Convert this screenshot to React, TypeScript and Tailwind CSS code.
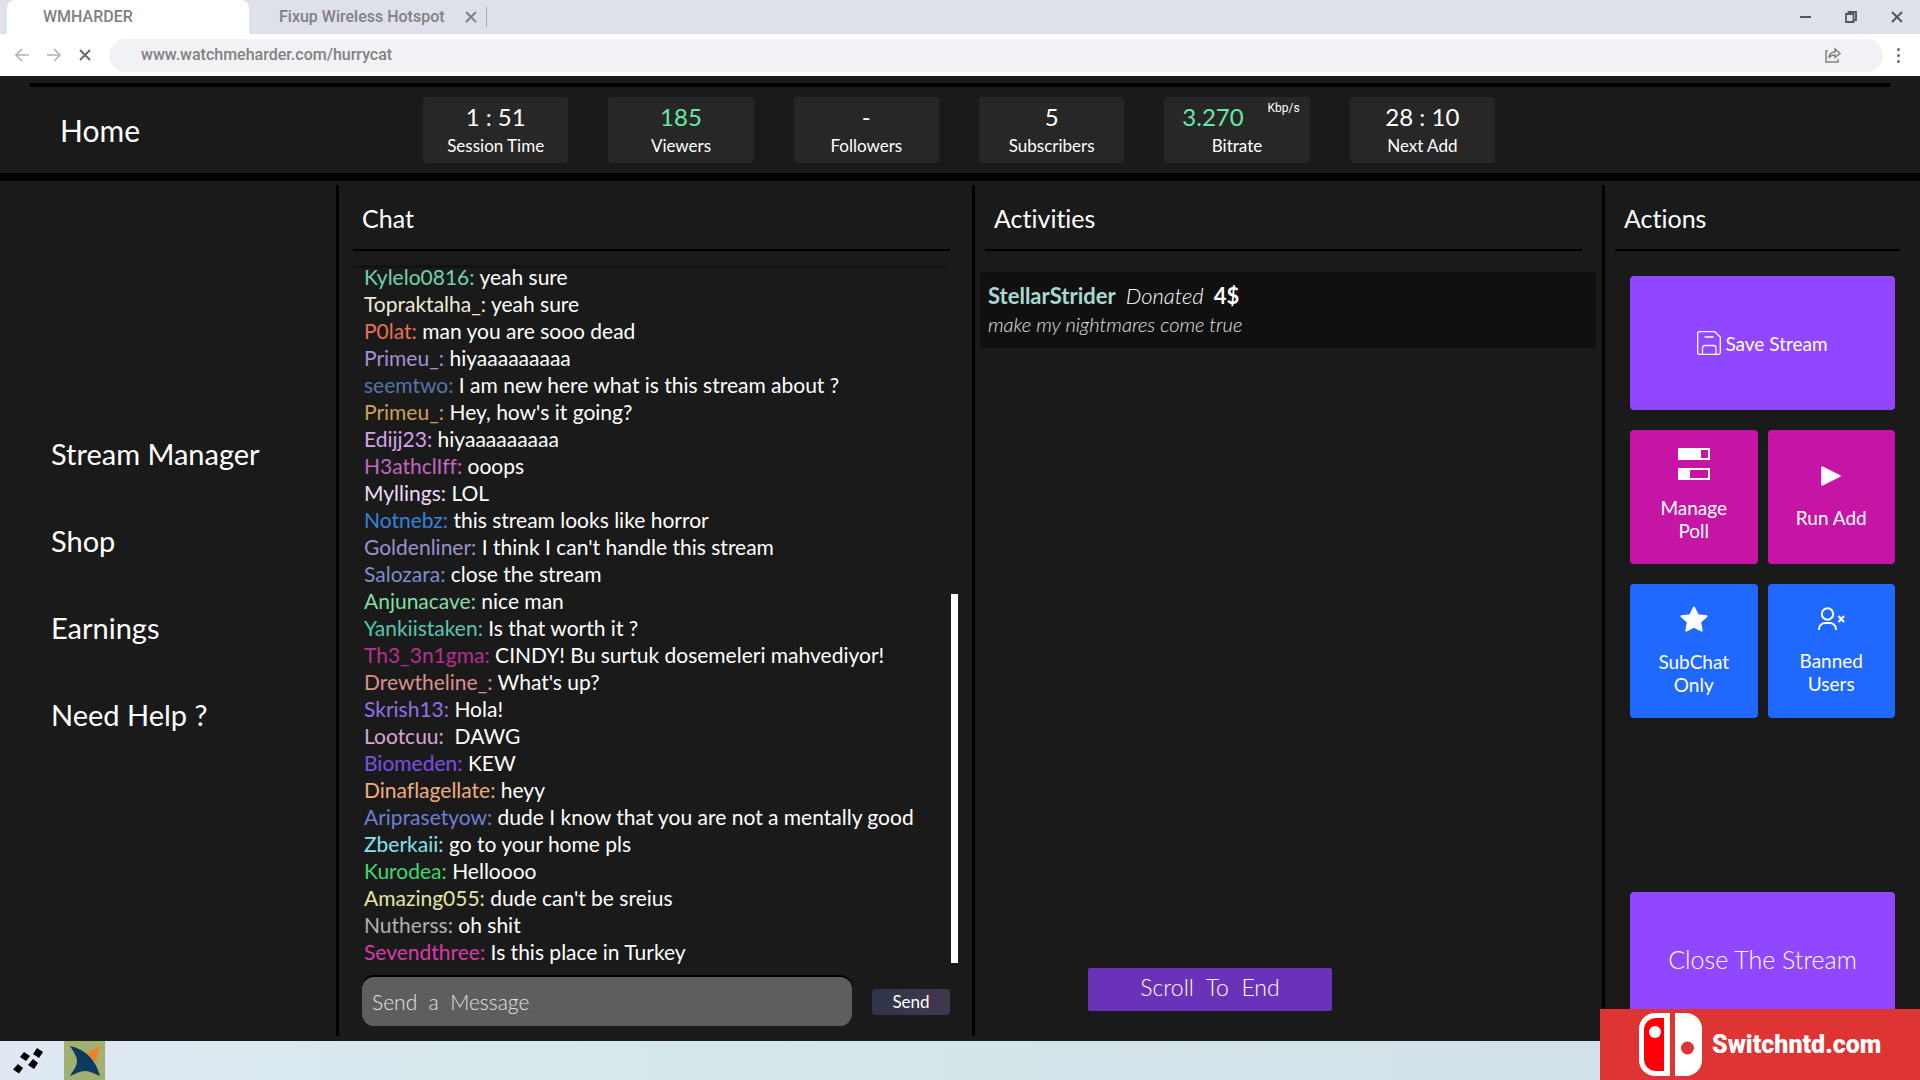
import { useState } from 'react';

const stats = [
  { value: '1 : 51', label: 'Session Time' },
  { value: '185', label: 'Viewers', green: true },
  { value: '-', label: 'Followers' },
  { value: '5', label: 'Subscribers' },
  { value: '3.270', label: 'Bitrate', green: true, unit: 'Kbp/s' },
  { value: '28 : 10', label: 'Next Add' },
];

const navLinks = [
  { href: '#manager', label: 'Stream Manager' },
  { href: '#shop', label: 'Shop' },
  { href: '#earnings', label: 'Earnings' },
  { href: '#help', label: 'Need Help ?' },
];

const messages = [
  { user: 'Kylelo0816', color: 'text-[#6fd3ab]', text: 'yeah sure' },
  { user: 'Topraktalha_', color: 'text-[#efe9dc]', text: 'yeah sure' },
  { user: 'P0lat', color: 'text-[#e8705c]', text: 'man you are sooo dead' },
  { user: 'Primeu_', color: 'text-[#a58fd6]', text: 'hiyaaaaaaaaa' },
  { user: 'seemtwo', color: 'text-[#5474ac]', text: 'I am new here what is this stream about ?' },
  { user: 'Primeu_', color: 'text-[#cda055]', text: "Hey, how's it going?" },
  { user: 'Edijj23', color: 'text-[#d7a3ea]', text: 'hiyaaaaaaaaa' },
  { user: 'H3athclIff', color: 'text-[#c268bf]', text: 'ooops' },
  { user: 'Myllings', color: 'text-[#eadcf5]', text: 'LOL' },
  { user: 'Notnebz', color: 'text-[#3682de]', text: 'this stream looks like horror' },
  { user: 'Goldenliner', color: 'text-[#9c92cb]', text: "I think I can't handle this stream" },
  { user: 'Salozara', color: 'text-[#7f8dcd]', text: 'close the stream' },
  { user: 'Anjunacave', color: 'text-[#84dfa5]', text: 'nice man' },
  { user: 'Yankiistaken', color: 'text-[#55c6b4]', text: 'Is that worth it ?' },
  { user: 'Th3_3n1gma', color: 'text-[#b92f93]', text: 'CINDY! Bu surtuk dosemeleri mahvediyor!' },
  { user: 'Drewtheline_', color: 'text-[#de9090]', text: "What's up?" },
  { user: 'Skrish13', color: 'text-[#9471e6]', text: 'Hola!' },
  { user: 'Lootcuu', color: 'text-[#dba5d4]', text: '\u00a0DAWG' },
  { user: 'Biomeden', color: 'text-[#7b50e0]', text: 'KEW' },
  { user: 'Dinaflagellate', color: 'text-[#efac80]', text: 'heyy' },
  { user: 'Ariprasetyow', color: 'text-[#6f7fd2]', text: 'dude I know that you are not a mentally good' },
  { user: 'Zberkaii', color: 'text-[#84e2ee]', text: 'go to your home pls' },
  { user: 'Kurodea', color: 'text-[#3fd873]', text: 'Helloooo' },
  { user: 'Amazing055', color: 'text-[#e2e6a4]', text: "dude can't be sreius" },
  { user: 'Nutherss', color: 'text-[#b4b0b0]', text: 'oh shit' },
  { user: 'Sevendthree', color: 'text-[#d93aa9]', text: 'Is this place in Turkey' },
];

const CloseIcon = ({ className = '' }: { className?: string }) => (
  <svg className={className} width="12" height="12" viewBox="0 0 12 12" stroke="currentColor" strokeWidth="2" fill="none">
    <path d="M1 1l10 10M11 1L1 11" />
  </svg>
);

const ArrowIcon = ({ className = '' }: { className?: string }) => (
  <svg className={className} width="14" height="14" viewBox="0 0 14 14" stroke="currentColor" strokeWidth="1.6" fill="none">
    <path d="M14 7H1.5M7 1L1 7l6 6" />
  </svg>
);

const SaveIcon = () => (
  <svg width="24" height="24" viewBox="0 0 24 24" fill="none" stroke="currentColor" strokeWidth="1.3" strokeLinejoin="round">
    <path d="M2.5 .7h15.3l5.5 5.5v15.3a1.8 1.8 0 0 1-1.8 1.8h-19A1.8 1.8 0 0 1 .7 21.5V2.5A1.8 1.8 0 0 1 2.5.7z" />
    <path d="M7.5 6h9M5.5 23v-6A2.5 2.5 0 0 1 8 14.5h8.5A2.5 2.5 0 0 1 19 17v6" />
  </svg>
);

const PollIcon = () => (
  <svg width="32" height="32" viewBox="0 0 32 32" fill="none">
    <path d="M1 1h30v10H1zM1 21h30v10H1z" stroke="currentColor" strokeWidth="2" />
    <path d="M0 0h23v12H0zM0 20h12v12H0z" fill="currentColor" />
  </svg>
);

const PlayIcon = () => (
  <svg width="20" height="20" viewBox="0 0 20 20" fill="currentColor" stroke="currentColor" strokeWidth="1.5" strokeLinejoin="round">
    <path d="M1 1l18 9-18 9z" />
  </svg>
);

const StarIcon = () => (
  <svg width="28" height="26" viewBox="0 0 28 26" fill="currentColor" stroke="currentColor" strokeWidth="2" strokeLinejoin="round">
    <path d="M14 1.5l3.8 7.7 8.7 1-6.4 5.9 1.6 8.6L14 20.5l-7.7 4.2 1.6-8.6-6.4-5.9 8.7-1z" />
  </svg>
);

const BannedIcon = () => (
  <svg width="27" height="24" viewBox="0 0 27 24" fill="none" stroke="currentColor" strokeWidth="2">
    <circle cx="9.5" cy="7" r="5.7" />
    <path d="M1 23v-1c0-3.500 3-6 6.200-6h4.600c3.200 0 6.200 2.500 6.200 6v1" />
    <path d="M20.5 9l5.500 6M26 9l-5.500 6" />
  </svg>
);

const BrowserBar = () => (
  <div className="bg-white font-[Roboto,sans-serif] text-base text-[#857f80]">
    <div className="flex h-[34px] items-stretch bg-[#dee1ea] pl-[7px]">
      <a href="#wmharder" className="flex w-[242px] items-center rounded-t-lg bg-white pl-9 font-medium">
        WMHARDER
      </a>
      <a href="#hotspot" className="flex items-center pl-[30px] font-medium">
        Fixup Wireless Hotspot
      </a>
      <button aria-label="Close tab" className="ml-5">
        <CloseIcon />
      </button>
      <span className="ml-[9px] h-5 w-px self-center bg-[#a9a9ad]" />
      <div className="ml-auto flex items-center gap-[34px] pr-[17px] text-[#55565a]">
        <button aria-label="Minimize" className="flex h-3 w-[11px] items-center">
          <span className="h-0.5 w-full bg-current" />
        </button>
        <button aria-label="Restore">
          <svg width="12" height="12" viewBox="0 0 12 12" fill="none" stroke="currentColor" strokeWidth="1.8">
            <path d="M1 3h7.500v8H1zM3.500 3V1H11v8H8.500" />
          </svg>
        </button>
        <button aria-label="Close window">
          <CloseIcon />
        </button>
      </div>
    </div>
    <div className="flex h-[42px] items-center pl-[15px]">
      <button aria-label="Back" className="text-[#b5b2b4]">
        <ArrowIcon />
      </button>
      <button aria-label="Forward" className="ml-[18px] text-[#b5b2b4]">
        <ArrowIcon className="rotate-180" />
      </button>
      <button aria-label="Stop" className="ml-[18px] text-[#6b696b]">
        <CloseIcon />
      </button>
      <div className="ml-[18px] flex h-[33px] flex-1 items-center rounded-full bg-[#f0f2f5] pr-[42px] pl-8">
        <input
          aria-label="Address"
          defaultValue="www.watchmeharder.com/hurrycat"
          className="flex-1 bg-transparent font-medium outline-none"
        />
        <svg width="16" height="16" viewBox="0 0 16 16" fill="none" stroke="currentColor" strokeWidth="1.5">
          <path d="M3 4H1v11h12v-3M4 11c0-4 2.500-6 6-6V2l5 4.500-5 4V8c-3 0-5 .8-6 3z" />
        </svg>
      </div>
      <button aria-label="Menu" className="mr-5 ml-[14px] flex flex-col gap-[3px] text-[#6b696b]">
        <span className="size-[3px] rounded-full bg-current" />
        <span className="size-[3px] rounded-full bg-current" />
        <span className="size-[3px] rounded-full bg-current" />
      </button>
    </div>
  </div>
);

const PanelTitle = ({ children, className }: { children: string; className: string }) => (
  <h2 className={`flex h-[66px] shrink-0 items-center border-b-2 border-black pt-1 pl-[9px] text-[25px] ${className}`}>
    {children}
  </h2>
);

const Chat = () => {
  const [draft, setDraft] = useState('');

  return (
    <section className="flex flex-col border-l-[3px] border-black">
      <PanelTitle className="mr-[22px] ml-[14px]">Chat</PanelTitle>
      <div className="relative mt-3 ml-[14px] flex flex-1 justify-between">
        {/* Top edge of the scroll area */}
        <div className="absolute top-0.5 right-[25px] left-0 h-[3px] bg-[#121212]" />
        <ul className="relative flex-1 pl-[11px] text-[21px] leading-[27px]">
          {messages.map((message, index) => (
            <li key={index}>
              <span className={message.color}>{message.user}:</span> {message.text}
            </li>
          ))}
        </ul>
        <div className="mr-[14px] mb-1 ml-1 flex w-[7px] flex-col justify-end">
          <div className="h-[369px] bg-white" />
        </div>
      </div>
      <form className="mt-[10px] mr-[22px] mb-[10px] ml-[23px] flex items-center gap-5" onSubmit={(e) => e.preventDefault()}>
        <input
          aria-label="Message"
          value={draft}
          onChange={(e) => setDraft(e.target.value)}
          placeholder="Send  a  Message"
          className="h-[49px] min-w-0 flex-1 rounded-xl bg-[#5e5e5e] px-[10px] text-[21px] font-light shadow-[0_-2px_0_#000] outline-none placeholder:whitespace-pre placeholder:text-[#e4e4e4]"
        />
        <button className="h-[26px] w-[78px] rounded-sm bg-linear-to-r from-[#2f3449] to-[#41384d] text-[17px] leading-6">
          Send
        </button>
      </form>
    </section>
  );
};

const Activities = () => (
  <section className="flex flex-col border-l-[3px] border-black">
    <PanelTitle className="mr-5 ml-[10px]">Activities</PanelTitle>
    <article className="mt-[21px] mr-[6px] ml-[5px] h-[76px] bg-[#101010] px-2 pt-[10px]">
      <p className="flex gap-[10px] text-[22px] leading-7">
        <b className="text-[#a9d8d3]">StellarStrider</b>
        <i className="font-light">Donated</i>
        <b>4$</b>
      </p>
      <p className="text-xl leading-7 font-light text-[#e4e4e4] italic">make my nightmares come true</p>
    </article>
    <button className="mt-auto mb-[25px] ml-[113px] h-[43px] w-[244px] rounded-xs bg-[#6a32b8] pb-1 text-[23px] font-light whitespace-pre">
      Scroll  To  End
    </button>
  </section>
);

const Actions = () => (
  <section className="flex flex-col border-l-[3px] border-black">
    <PanelTitle className="mr-5 ml-[10px]">Actions</PanelTitle>
    <div className="mt-[25px] mr-[25px] mb-[10px] ml-[25px] flex flex-1 flex-col gap-5 text-[19px] leading-[23px]">
      <button className="flex h-[134px] items-center justify-center gap-1 rounded-sm bg-[#9147ff]">
        <SaveIcon />
        Save Stream
      </button>
      <div className="grid grid-cols-2 gap-x-[10px] gap-y-5">
        <button className="flex h-[134px] flex-col items-center justify-center gap-4 rounded-sm bg-[#c515a5] pb-1">
          <PollIcon />
          <span className="w-20">Manage Poll</span>
        </button>
        <button className="flex h-[134px] flex-col items-center justify-center gap-5 rounded-sm bg-[#c515a5]">
          <PlayIcon />
          Run Add
        </button>
        <button className="flex h-[134px] flex-col items-center justify-center gap-[18px] rounded-sm bg-[#1f69ff]">
          <StarIcon />
          <span className="w-20">SubChat Only</span>
        </button>
        <button className="flex h-[134px] flex-col items-center justify-center gap-[18px] rounded-sm bg-[#1f69ff]">
          <BannedIcon />
          <span className="w-20">Banned Users</span>
        </button>
      </div>
      <button className="mt-auto h-[134px] rounded-sm bg-[#9147ff] text-[25px] font-light">Close The Stream</button>
    </div>
  </section>
);

const Taskbar = () => (
  <footer className="flex h-[39px] bg-linear-to-r from-[#dfe8f3] via-[#d5e8eb] via-30% to-[#d2dfe9]">
    <button aria-label="Start" className="flex w-16 items-center justify-center pr-2">
      <svg width="30" height="26" viewBox="0 0 30 26">
        <path d="M5 16l5 4-4 5.500-6-4zM11 4l6 4-4 5-6-4zM24 0l6 4-4 6-6-4zM20 11l5 4-4 6-6-4z" />
      </svg>
    </button>
    <button aria-label="Browser" className="flex w-[41px] items-center justify-center bg-[#a2b171]">
      <svg width="32" height="32" viewBox="0 0 32 32">
        <path d="M16 9l15-8-4 16z" fill="#f0812d" />
        <path d="M1 1c15 3 26 14 30 30-5-2-10-5-15-5-5 0-10 3-15 5 3-6 7-9 7-15C8 11 4 6 1 1z" fill="#0d3b5f" />
      </svg>
    </button>
  </footer>
);

const Banner = () => (
  <a
    href="#switchntd"
    className="absolute right-0 bottom-0 flex h-[71px] w-80 items-center bg-[#de3433] pl-[39px] text-white"
  >
    <svg width="63" height="63" viewBox="0 0 63 63">
      <path fill="#fff" d="M16 0h15v63H16A16 16 0 0 1 0 47V16A16 16 0 0 1 16 0z" />
      <path fill="#ff0008" d="M17 5h8v53h-8A12 12 0 0 1 5 46V17A12 12 0 0 1 17 5z" />
      <circle cx="16" cy="19" r="6" fill="#fff" />
      <path fill="#fff" d="M36 0h11a16 16 0 0 1 16 16v31a16 16 0 0 1-16 16H36z" />
      <circle cx="48.5" cy="35" r="6.5" fill="#de3433" />
    </svg>
    <span className="ml-[10px] font-[Impact,Roboto,sans-serif] text-[25px] font-black">Switchntd.com</span>
  </a>
);

const App = () => (
  <div className="relative flex min-h-screen flex-col bg-[#1a1a1a] font-[Lato,sans-serif] text-white [font-variant-ligatures:none]">
    <BrowserBar />
    <header className="border-b-8 border-black pt-[7px]">
      <div className="mx-[30px] h-1 bg-black" />
      <div className="flex h-[86px] items-center">
        <h1 className="w-[423px] pl-[60px] text-[30px]">Home</h1>
        <dl className="grid w-[1072px] grid-cols-6 gap-10">
          {stats.map((stat) => (
            <div key={stat.label} className="relative flex h-[66px] flex-col-reverse items-center justify-center rounded-sm bg-[#272727] pb-0.5">
              <dt className="text-[17px] leading-6">{stat.label}</dt>
              <dd className={`text-2xl leading-[34px] ${stat.green ? 'text-[#66eaa8]' : ''} ${stat.unit ? 'pr-12' : ''}`}>
                {stat.value}
                {stat.unit && (
                  <span className="absolute top-[3px] right-[10px] font-[Roboto,sans-serif] text-xs leading-4 text-white">{stat.unit}</span>
                )}
              </dd>
            </div>
          ))}
        </dl>
      </div>
    </header>
    <main className="grid flex-1 grid-cols-[336fr_636fr_630fr_318fr] pt-1 pb-[5px]">
      <nav className="flex flex-col justify-center gap-[51px] pb-[52px] pl-[51px] text-[29px] leading-9">
        {navLinks.map((link) => (
          <a key={link.href} href={link.href}>
            {link.label}
          </a>
        ))}
      </nav>
      <Chat />
      <Activities />
      <Actions />
    </main>
    <Taskbar />
    <Banner />
  </div>
);

export default App;
